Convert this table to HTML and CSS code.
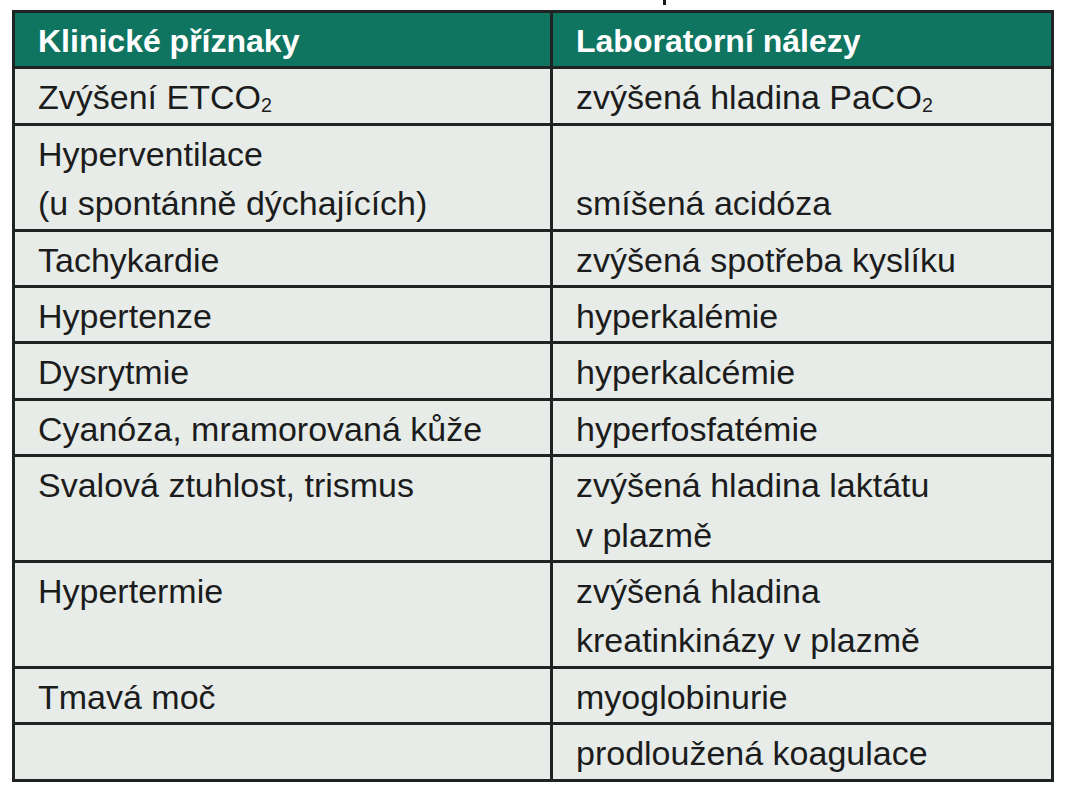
FILE: index.html
```html
<!DOCTYPE html>
<html lang="cs">
<head>
<meta charset="utf-8">
<title>Klinické příznaky a laboratorní nálezy</title>
<link rel="stylesheet" href="styles.css">
</head>
<body>
<div class="page">
  <div class="above"><span class="tick"></span></div>
  <table class="grid">
    <colgroup><col class="c1"><col class="c2"></colgroup>
    <thead>
      <tr><th>Klinické příznaky</th><th>Laboratorní nálezy</th></tr>
    </thead>
    <tbody>
      <tr><td>Zvýšení ETCO<sub>2</sub></td><td>zvýšená hladina PaCO<sub>2</sub></td></tr>
      <tr><td>Hyperventilace<br>(u spontánně dýchajících)</td><td class="bottom">smíšená acidóza</td></tr>
      <tr><td>Tachykardie</td><td>zvýšená spotřeba kyslíku</td></tr>
      <tr><td>Hypertenze</td><td>hyperkalémie</td></tr>
      <tr><td>Dysrytmie</td><td>hyperkalcémie</td></tr>
      <tr><td>Cyanóza, mramorovaná kůže</td><td>hyperfosfatémie</td></tr>
      <tr><td>Svalová ztuhlost, trismus</td><td>zvýšená hladina laktátu<br>v plazmě</td></tr>
      <tr><td>Hypertermie</td><td>zvýšená hladina<br>kreatinkinázy v plazmě</td></tr>
      <tr><td>Tmavá moč</td><td>myoglobinurie</td></tr>
      <tr><td></td><td>prodloužená koagulace</td></tr>
    </tbody>
  </table>
</div>
</body>
</html>
```
FILE: styles.css
```css
html, body {
  margin: 0;
  padding: 0;
  background: #ffffff;
}

.page {
  padding-left: 12px;
  font-family: "Liberation Sans", Arial, sans-serif;
}

.above {
  height: 10px;
  position: relative;
}

.tick {
  display: block;
  width: 3px;
  height: 5px;
  margin-left: 651px;
  background: #1a1a1a;
}

.grid {
  border-collapse: collapse;
  table-layout: fixed;
  width: 1039px;
  border: 3px solid #1f2321;
  background: #e7ece9;
  color: #1c1c1c;
  font-size: 34px;
}

.c1 { width: 538px; }
.c2 { width: 501px; }

.grid th,
.grid td {
  border: 3px solid #1f2321;
  padding: 4px 8px 0 23px;
  line-height: 49.4px;
  text-align: left;
  vertical-align: top;
  white-space: nowrap;
}

.grid th {
  background: #0f7460;
  color: #ffffff;
  font-weight: bold;
  font-size: 32px;
}

.grid td.bottom {
  vertical-align: bottom;
}

.grid sub {
  font-size: 58%;
  line-height: 0;
  vertical-align: -3px;
}
```
